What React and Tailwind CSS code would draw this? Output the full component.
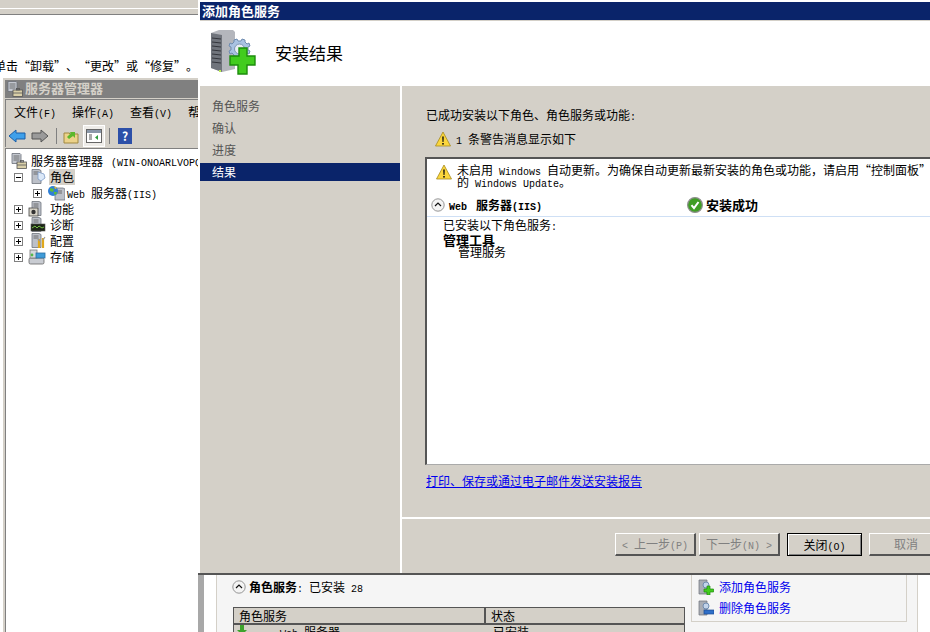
function L({ children }) {
  return <span className="font-['Liberation_Mono',monospace] text-[10px] leading-[0px] whitespace-pre">{children}</span>;
}

function ServerIcon() {
  return (
    <svg width="16" height="16" viewBox="0 0 16 16" className="shrink-0">
      <path d="M1 0.500h8l1 1v9H1z" fill="#c4c8d0" stroke="#6b7078" strokeWidth="0.8" />
      <path d="M2.500 3h6M2.500 5h6M2.500 7h6" stroke="#555" strokeWidth="0.8" />
      <rect x="6" y="9" width="9.500" height="6.500" fill="#d9cfa8" stroke="#555" strokeWidth="0.8" />
      <path d="M6 12h9.500" stroke="#555" strokeWidth="0.8" />
      <rect x="9.500" y="7.500" width="3" height="1.500" fill="none" stroke="#555" strokeWidth="0.8" />
    </svg>
  );
}

function TreeIcon({ kind }) {
  return (
    <svg width="18" height="16" viewBox="0 0 18 16" className="shrink-0">
      <path d="M4 0.500h7l2 1v13H4z" fill="#bcc0c8" stroke="#70757d" strokeWidth="0.8" />
      <path d="M5.500 3h5M5.500 5h5" stroke="#555" strokeWidth="0.8" />
      {kind === 'role' && <path d="M10 3l6 2 1 4-4 3-3-2z" fill="#dbe8f8" stroke="#7d9cc6" strokeWidth="0.8" />}
      {kind === 'feature' && (
        <>
          <rect x="1" y="7" width="9" height="8" fill="#d8d4c8" stroke="#444" strokeWidth="0.8" />
          <circle cx="5.500" cy="11" r="2.200" fill="#333" />
        </>
      )}
      {kind === 'diag' && (
        <>
          <rect x="3" y="7" width="14" height="7" fill="#1d2418" stroke="#555" strokeWidth="0.6" />
          <path d="M4 11l3-2 2 2 2-2 3 2 2-1" stroke="#7fd04a" fill="none" strokeWidth="0.9" />
        </>
      )}
      {kind === 'config' && (
        <>
          <path d="M11 6v9M15 5v10" stroke="#e0a81c" strokeWidth="2.200" />
          <path d="M9 5l3 3M17 4l-2 3" stroke="#999" strokeWidth="1.200" />
        </>
      )}
    </svg>
  );
}

function StorageIcon() {
  return (
    <svg width="18" height="16" viewBox="0 0 18 16" className="shrink-0">
      <rect x="1" y="9" width="15" height="6" rx="1.500" fill="#c9ccd2" stroke="#666" strokeWidth="0.8" />
      <rect x="2" y="1" width="7" height="8" fill="#d6d8dc" stroke="#777" strokeWidth="0.8" />
      <rect x="8" y="4" width="9" height="5" fill="#3f9bd8" stroke="#2a6ea3" strokeWidth="0.8" />
      <circle cx="4" cy="6" r="1.400" fill="#54b948" />
    </svg>
  );
}

function WebIcon() {
  return (
    <svg width="18" height="16" viewBox="0 0 18 16" className="shrink-0">
      <path d="M8 3h8l2 1v11H8z" fill="#bcc0c8" stroke="#70757d" strokeWidth="0.8" />
      <path d="M10 6h5M10 8h5" stroke="#555" strokeWidth="0.8" />
      <circle cx="6" cy="6" r="5" fill="#2f7fd6" />
      <path d="M3 3l4 1-1 3-3-1zM7 7l3 0-1 3-2-1z" fill="#5cbb3c" />
      <path d="M7 1l3 2-2 1z" fill="#f0c020" />
    </svg>
  );
}

function Expander({ open }) {
  return (
    <span className="w-[9px] h-[9px] border border-[#808080] bg-white relative shrink-0 block">
      <span className="absolute left-[1px] top-[3px] w-[5px] h-[1px] bg-black" />
      {!open && <span className="absolute left-[3px] top-[1px] w-[1px] h-[5px] bg-black" />}
    </span>
  );
}

function Warning() {
  return (
    <svg width="16" height="16" viewBox="0 0 16 16" className="shrink-0">
      <path d="M8 1L15.500 15H0.500z" fill="#fbd63c" stroke="#a68a20" strokeWidth="0.8" />
      <path d="M7.200 5.500h1.600l-.3 5.500h-1z" fill="#111" />
      <rect x="7.200" y="12" width="1.600" height="1.600" fill="#111" />
    </svg>
  );
}

function Collapse() {
  return (
    <svg width="14" height="14" viewBox="0 0 14 14" className="shrink-0">
      <circle cx="7" cy="7" r="6.200" fill="#f4f4f4" stroke="#8a8a8a" strokeWidth="0.9" />
      <path d="M4 8l3-3 3 3" fill="none" stroke="#111" strokeWidth="1.200" />
    </svg>
  );
}

function Check() {
  return (
    <svg width="16" height="16" viewBox="0 0 16 16" className="shrink-0">
      <circle cx="8" cy="8" r="7.400" fill="#3f9e24" stroke="#8f8f8f" strokeWidth="1.200" />
      <path d="M4.500 8.200l2.500 3 4.500-6.200" fill="none" stroke="#fff" strokeWidth="2" />
    </svg>
  );
}

function BigServer() {
  return (
    <svg width="46" height="50" viewBox="0 0 46 50" className="shrink-0">
      <path d="M1 4l8-3h14l2 2v37l-13 3-11-4z" fill="#b4b6bc" />
      <path d="M1 4l11 2v37l-11-4z" fill="#70747c" />
      <path d="M2 9l9 1M2 13l9 1M2 17l9 1M2 21l9 1M2 25l9 1M2 29l9 1M2 33l9 1" stroke="#34363c" strokeWidth="1" />
      <rect x="9" y="41" width="2" height="2" fill="#b8ef50" />
      <path d="M24 11l3-1 1 2 3 0 1-2 3 1 0 2 2 2 2-1 1 3-2 1 0 3 2 1-1 3-2-1-2 2 0 2-3 1-1-2-3 0-1 2-3-1 0-2-2-2-2 1-1-3 2-1 0-3-2-1 1-3 2 1 2-2z" fill="#a9c2e2" stroke="#6f8cb0" strokeWidth="1" />
      <circle cx="29.500" cy="20" r="5" fill="#e8edf4" stroke="#7d95b6" />
      <path d="M29 19h8v8h8v9h-8v9h-9v-9h-8v-9h9z" fill="#42cc1e" stroke="#1d8c0c" strokeWidth="1.400" />
    </svg>
  );
}

function SmallAction({ minus }) {
  return (
    <svg width="16" height="16" viewBox="0 0 16 16" className="shrink-0">
      <path d="M1 1h8v14H1z" fill="#a8acb4" stroke="#6d7178" strokeWidth="0.7" />
      <circle cx="8" cy="6" r="3" fill="#c3d4ea" stroke="#6f8cb0" />
      {minus ? (
        <rect x="6" y="10" width="10" height="4" fill="#2f6fc8" stroke="#1c4b94" strokeWidth="0.7" />
      ) : (
        <path d="M9 7h3v3h3.500v3H12v3H9v-3H6v-3h3z" fill="#42cc1e" stroke="#1d8c0c" strokeWidth="0.7" />
      )}
    </svg>
  );
}

function Toolbar() {
  return (
    <div className="h-[23px] flex items-center pl-[2px] bg-[#d4d0c8] shrink-0">
      <svg width="18" height="14" viewBox="0 0 18 14" className="shrink-0">
        <path d="M1 7l7-6v3h9v6H8v3z" fill="#3fa0ea" stroke="#1b5fa8" />
      </svg>
      <svg width="18" height="14" viewBox="0 0 18 14" className="ml-[5px] shrink-0">
        <path d="M17 7l-7-6v3H1v6h9v3z" fill="#9a9a9a" stroke="#555" />
      </svg>
      <span className="w-[1px] h-[16px] bg-[#808080] ml-[7px]" />
      <svg width="16" height="16" viewBox="0 0 16 16" className="ml-[6px] shrink-0">
        <path d="M1 5h5l1 1h8v9H1z" fill="#ecd28a" stroke="#a08840" />
        <path d="M4 9l4-4-2-1h6v6l-2-2-4 3z" fill="#5cb82c" />
      </svg>
      <span className="w-[22px] h-[22px] ml-[4px] bg-[#eeece8] border border-white flex items-center justify-center shrink-0">
        <svg width="16" height="14" viewBox="0 0 16 14">
          <rect x="0.500" y="0.500" width="15" height="13" fill="#fff" stroke="#666" />
          <rect x="1" y="1" width="14" height="3" fill="#8a97a8" />
          <path d="M3 6h3M3 8h3M3 10h3" stroke="#555" />
          <path d="M12 6v5l-3-2.500z" fill="#2f9c3c" />
        </svg>
      </span>
      <span className="w-[1px] h-[16px] bg-[#808080] ml-[4px]" />
      <span className="w-[14px] h-[16px] ml-[8px] bg-[#2c4fa8] text-white text-[12px] leading-[16px] font-bold text-center shrink-0">?</span>
    </div>
  );
}

function TreeRow({ className, expander, open, icon, children, active, labelClass = 'ml-[3px]' }) {
  return (
    <div className={`h-[16px] flex items-center whitespace-nowrap ${className}`}>
      {expander && <Expander open={open} />}
      <span className="ml-[5px] flex shrink-0">{icon}</span>
      <span className={`px-[1px] leading-[16px] ${labelClass} ${active ? 'bg-[#d4d0c8]' : ''}`}>{children}</span>
    </div>
  );
}

function ServerManager() {
  return (
    <div className="absolute left-[2px] top-[77px] w-[196px] h-[555px] bg-[#d4d0c8] border-l border-t border-white overflow-hidden">
      <div className="ml-[2px] mt-[2px] h-[18px] bg-[#808080] flex items-center pl-[2px] text-[#d4d0c8] font-bold text-[13px] whitespace-nowrap">
        <ServerIcon />
        <span className="ml-[2px] mb-[2px]">服务器管理器</span>
      </div>
      <div className="ml-[2px] mt-[1px] border-l border-t border-[#808080]">
        <div className="h-[24px] flex items-center pl-[8px] gap-[16px] text-[12px] whitespace-nowrap">
          <span>文件<L>(F)</L></span>
          <span>操作<L>(A)</L></span>
          <span>查看<L>(V)</L></span>
          <span>帮助</span>
        </div>
        <Toolbar />
      </div>
      <div className="ml-[2px] mt-[1px] h-[500px] bg-white border-l border-t border-[#808080] text-[12px] pt-[4px] text-black">
        <TreeRow className="pl-0" icon={<ServerIcon />}>
          服务器管理器<span className="ml-[8px]"><L>(WIN-ONOARLVOPQ</L></span>
        </TreeRow>
        <TreeRow className="pl-[8px]" expander open icon={<TreeIcon kind="role" />} active>角色</TreeRow>
        <TreeRow className="pl-[27px]" expander icon={<WebIcon />} labelClass="ml-[1px]">
          <L>Web </L>服务器<L>(IIS)</L>
        </TreeRow>
        <TreeRow className="pl-[8px]" expander icon={<TreeIcon kind="feature" />}>功能</TreeRow>
        <TreeRow className="pl-[8px]" expander icon={<TreeIcon kind="diag" />}>诊断</TreeRow>
        <TreeRow className="pl-[8px]" expander icon={<TreeIcon kind="config" />}>配置</TreeRow>
        <TreeRow className="pl-[8px]" expander icon={<StorageIcon />}>存储</TreeRow>
      </div>
    </div>
  );
}

function WizardButton({ children, disabled, primary, className = '' }) {
  return (
    <div
      className={`h-[23px] flex items-center justify-center text-[12px] whitespace-nowrap bg-[#d4d0c8] shrink-0 ${
        primary
          ? 'border border-black shadow-[inset_1px_1px_0_#fff,inset_-1px_-1px_0_#808080] text-black'
          : 'border-t border-l border-white border-r-2 border-b-2 border-r-[#555] border-b-[#555]'
      } ${disabled ? 'text-[#808080]' : ''} ${className}`}
    >
      <span>{children}</span>
    </div>
  );
}

function Dialog() {
  return (
    <div className="absolute left-[198px] top-0 w-[732px] h-[573px] bg-[#d4d0c8] border-l-2 border-t-2 border-white flex flex-col overflow-hidden">
      <div className="h-[18px] bg-[#0a246a] text-white font-bold text-[13px] leading-[18px] pl-[2px] shrink-0">添加角色服务</div>
      <div className="h-[65px] bg-white flex items-center pl-[10px] mt-[1px] shrink-0">
        <BigServer />
        <span className="ml-[19px] mb-[2px] text-[17px] leading-[22px] text-black">安装结果</span>
      </div>
      <div className="flex-1 flex min-h-0">
        <div className="w-[200px] pt-[9px] text-[12px] text-[#555] shrink-0">
          <div className="h-[22px] leading-[22px] pl-[12px]">角色服务</div>
          <div className="h-[22px] leading-[22px] pl-[12px]">确认</div>
          <div className="h-[22px] leading-[22px] pl-[12px]">进度</div>
          <div className="h-[18px] leading-[18px] pl-[12px] mt-[2px] bg-[#0a246a] text-white">结果</div>
        </div>
        <div className="w-[2px] bg-white shrink-0" />
        <div className="flex-1 flex flex-col min-w-0">
          <div className="flex-1 pl-[24px] pt-[21px] min-h-0">
            <div className="text-[12px] leading-[16px] text-black whitespace-nowrap">已成功安装以下角色、角色服务或功能<L>:</L></div>
            <div className="flex items-center mt-[8px] ml-[9px] text-[12px] leading-[16px] whitespace-nowrap">
              <Warning />
              <span className="ml-[5px]"><L>1 </L>条警告消息显示如下</span>
            </div>
            <div className="mt-[10px] -ml-[1px] h-[308px] bg-white border-l-2 border-t-2 border-b border-[#555] border-b-[#aaa] w-[600px] text-[12px] text-black">
              <div className="flex pl-[9px] pt-[5px]">
                <Warning />
                <div className="ml-[5px] leading-[12px] whitespace-nowrap">
                  <div>未启用<L> Windows </L>自动更新。为确保自动更新最新安装的角色或功能，请启用“控制面板”</div>
                  <div>的<L> Windows Update</L>。</div>
                </div>
              </div>
              <div className="flex items-center h-[24px] mt-[5px] pl-[4px] font-bold whitespace-nowrap border-b border-[#cfe0f5]">
                <Collapse />
                <span className="ml-[4px] w-[238px] shrink-0">
                  <L>Web </L>
                  <span className="ml-[3px]">服务器</span>
                  <L>(IIS)</L>
                </span>
                <Check />
                <span className="ml-[3px] text-[13px]">安装成功</span>
              </div>
              <div className="pl-[16px]">
                <div className="leading-[16px]">已安装以下角色服务<L>:</L></div>
                <div className="leading-[12px] font-bold text-[13px] mt-[1px]">管理工具</div>
                <div className="leading-[14px] pl-[15px] -mt-[1px]">管理服务</div>
              </div>
            </div>
            <div className="mt-[8px] text-[12px] leading-[16px] text-[#0000ee] underline whitespace-nowrap">打印、保存或通过电子邮件发送安装报告</div>
          </div>
          <div className="h-[56px] border-t-2 border-white flex pl-[213px] pt-[14px] shrink-0">
            <WizardButton disabled className="w-[81px]"><L>&lt; </L>上一步<L>(P)</L></WizardButton>
            <WizardButton disabled className="w-[81px] ml-[3px]">下一步<L>(N) &gt;</L></WizardButton>
            <WizardButton primary className="w-[75px] ml-[7px]">关闭<L>(O)</L></WizardButton>
            <WizardButton disabled className="w-[75px] ml-[7px]">取消</WizardButton>
          </div>
        </div>
      </div>
    </div>
  );
}

function RolePanel() {
  return (
    <div className="absolute left-[198px] top-[573px] w-[732px] h-[59px] bg-white border-t-2 border-[#555] flex overflow-hidden">
      <div className="w-[6px] bg-[#a8a8a8] shrink-0" />
      <div className="w-[12px] shrink-0" />
      <div className="w-[702px] bg-[#f5f5f5] border-l border-r border-[#d4d0c8] flex pl-[15px] shrink-0">
        <div className="w-[453px] shrink-0">
          <div className="flex items-center h-[16px] mt-[4px] text-[12px] whitespace-nowrap">
            <Collapse />
            <span className="ml-[3px] font-bold">角色服务</span>
            <span><L>: </L>已安装<L> 28</L></span>
          </div>
          <div className="mt-[12px] ml-[1px] border border-[#555] bg-[#d4d0c8] h-[30px] text-[12px]">
            <div className="flex h-[17px] border-b-2 border-[#555] leading-[15px]">
              <span className="w-[252px] pl-[5px] border-r-2 border-[#555]">角色服务</span>
              <span className="pl-[5px]">状态</span>
            </div>
            <div className="flex h-[14px] leading-[14px] whitespace-nowrap overflow-hidden">
              <span className="w-[252px] pl-[1px] flex">
                <svg width="14" height="14" viewBox="0 0 14 14" className="shrink-0">
                  <path d="M5 0h4v5h3l-5 5-5-5h3z" fill="#3ea32c" />
                </svg>
                <span className="ml-[31px]"><L>Web </L>服务器</span>
              </span>
              <span className="pl-[7px]">已安装</span>
            </div>
          </div>
        </div>
        <div className="ml-[6px] w-[216px] h-[47px] border-b border-l border-r border-[#d4d0c8] pl-[6px] pt-[1px] text-[12px] text-[#0000ee]">
          <div className="flex items-center h-[21px] gap-[5px]">
            <SmallAction />
            添加角色服务
          </div>
          <div className="flex items-center h-[21px] gap-[5px]">
            <SmallAction minus />
            删除角色服务
          </div>
        </div>
      </div>
    </div>
  );
}

export default function App() {
  return (
    <div className="relative w-[930px] h-[632px] overflow-hidden bg-white text-black font-['Noto_Sans_CJK_SC','Liberation_Sans',sans-serif] [text-spacing-trim:space-all]">
      <div className="h-[8px] bg-[#d4d0c8]" />
      <div className="h-[1px] bg-white" />
      <div className="h-[5px] bg-[#d4d0c8]" />
      <div className="h-[1px] bg-[#808080]" />
      <div className="pt-[43px] -ml-[6px] text-[12px] leading-[16px] whitespace-nowrap">
        单击“卸载”、“更改”或“修复”。
      </div>
      <ServerManager />
      <Dialog />
      <RolePanel />
    </div>
  );
}
